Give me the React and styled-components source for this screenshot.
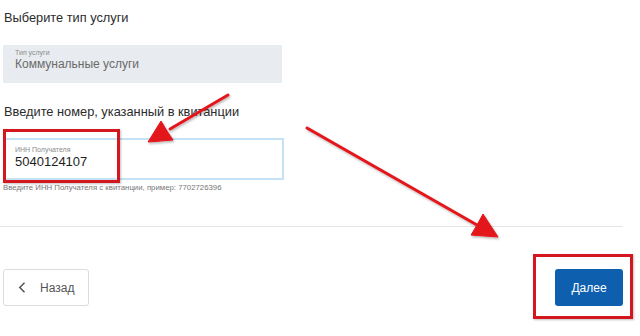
import React from 'react'
import styled, { createGlobalStyle } from 'styled-components';

const GlobalStyle = createGlobalStyle`
  body {
    margin: 0;
    background: #fff;
    font-family: 'Liberation Sans', Arial, sans-serif;
  }
`;

const Page = styled.div`
  position: relative;
  width: 640px;
  height: 336px;
  overflow: hidden;
  box-sizing: border-box;
  padding: 10px 17px 0 3px;
`;

const Title = styled.h2`
  margin: ${p => p.$top || 0}px 0 ${p => p.$bottom || 0}px 1px;
  font-size: 12.8px;
  line-height: 16px;
  font-weight: normal;
  color: #2b2b2b;
`;

const Field = styled.div`
  width: ${p => p.$width}px;
  height: ${p => p.$height}px;
  box-sizing: border-box;
  display: flex;
  flex-direction: column;
  background: ${p => (p.$disabled ? '#e8ecf0' : '#fff')};
  border: 2px solid ${p => (p.$disabled ? '#e8ecf0' : '#c4e2f5')};
  padding: ${p => (p.$disabled ? '2px 10px' : '6px 10px')};
`;

const FieldLabel = styled.span`
  font-size: 7px;
  line-height: 8px;
  color: #8a8a8a;
`;

const FieldValue = styled.span`
  font-size: ${p => (p.$muted ? 12 : 13)}px;
  line-height: ${p => (p.$muted ? 14 : 16)}px;
  color: ${p => (p.$muted ? '#6a6a6a' : '#1e1e1e')};
`;

const Hint = styled.div`
  margin-top: 3px;
  font-size: 7.8px;
  line-height: 9px;
  color: #777;
`;

const Divider = styled.hr`
  margin: 34px 0 0 -3px;
  border: 0;
  border-top: 1px solid #e4e4e4;
`;

const Footer = styled.div`
  display: flex;
  justify-content: space-between;
  margin-top: 42px;
`;

const BackButton = styled.button`
  width: 86px;
  height: 37px;
  box-sizing: border-box;
  display: flex;
  align-items: center;
  gap: 14px;
  padding: 0 0 0 14px;
  background: #fff;
  border: 1px solid #dcdcdc;
  border-radius: 3px;
  font-family: inherit;
  font-size: 12px;
  color: #555;
`;

const NextButton = styled.button`
  width: 68px;
  height: 37px;
  background: #0e5fae;
  border: 0;
  border-radius: 3px;
  font-family: inherit;
  font-size: 12px;
  color: #fff;
`;

const Highlight = styled.div`
  position: absolute;
  left: ${p => p.$x}px;
  top: ${p => p.$y}px;
  width: ${p => p.$w}px;
  height: ${p => p.$h}px;
  box-sizing: border-box;
  border: 3px solid #d4171e;
  box-shadow: 1px 1px 2px rgba(0, 0, 0, 0.25);
  pointer-events: none;
`;

const Arrows = styled.svg`
  position: absolute;
  left: 0;
  top: 0;
  pointer-events: none;
`;

const Chevron = () => (
  <svg width="8" height="11" viewBox="0 0 8 11">
    <path d="M6.5 0.8 L1.8 5.5 L6.5 10.2" fill="none" stroke="#555" strokeWidth="1.5" />
  </svg>
);

const App = () => {
  return (
    <>
      <GlobalStyle />
      <Page>
        <Title $bottom={19}>Выберите тип услуги</Title>
        <Field $width={279} $height={38} $disabled>
          <FieldLabel>Тип услуги</FieldLabel>
          <FieldValue $muted>Коммунальные услуги</FieldValue>
        </Field>

        <Title $top={21} $bottom={18}>Введите номер, указанный в квитанции</Title>
        <Field $width={281} $height={42}>
          <FieldLabel>ИНН Получателя</FieldLabel>
          <FieldValue>5040124107</FieldValue>
        </Field>
        <Hint>Введите ИНН Получателя с квитанции, пример: 7702726396</Hint>

        <Divider />

        <Footer>
          <BackButton>
            <Chevron />
            Назад
          </BackButton>
          <NextButton>Далее</NextButton>
        </Footer>

        <Highlight $x={3} $y={129} $w={117} $h={54} />
        <Highlight $x={533} $y={254} $w={100} $h={65} />

        <Arrows width="640" height="336" viewBox="0 0 640 336">
          <defs>
            <filter id="shadow" x="-10%" y="-10%" width="130%" height="130%">
              <feDropShadow dx="1" dy="1.5" stdDeviation="1" floodColor="#000" floodOpacity="0.3" />
            </filter>
          </defs>
          <g filter="url(#shadow)" fill="#e3151b" stroke="#e3151b">
            <line x1="228" y1="95" x2="170" y2="129" strokeWidth="3" strokeLinecap="round" />
            <polygon points="148,142 173,140 167,131 161,121" strokeWidth="1" />
            <line x1="307" y1="128" x2="477" y2="225" strokeWidth="3" strokeLinecap="round" />
            <polygon points="498,237 471,235 477,225 483,214" strokeWidth="1" />
          </g>
        </Arrows>
      </Page>
    </>
  )
}

export default App
